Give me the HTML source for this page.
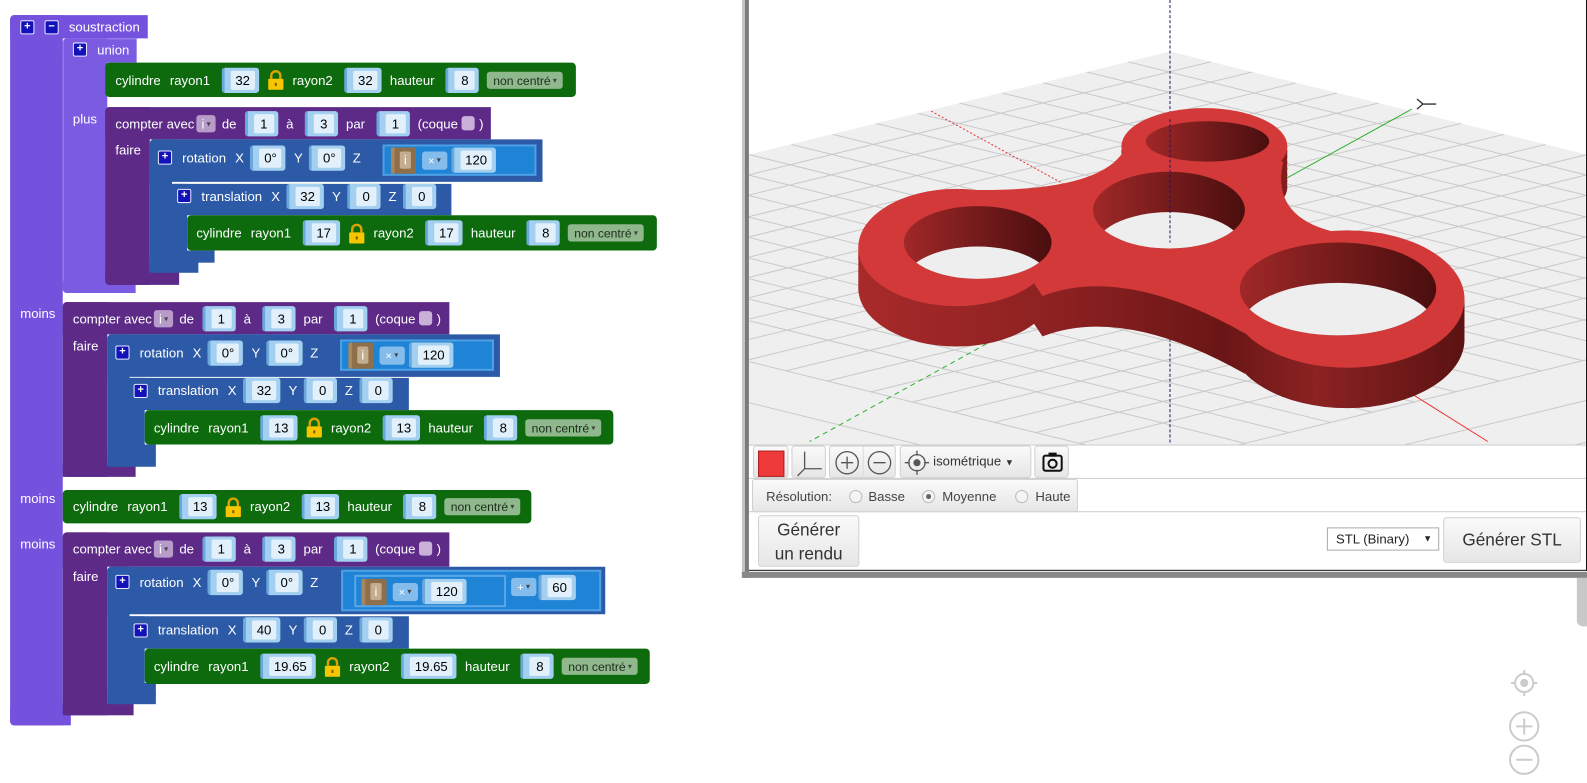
<!DOCTYPE html>
<html><head><meta charset="utf-8"><style>
html,body{margin:0;padding:0;background:#fff;overflow:hidden;width:1587px;height:782px}
#w{position:absolute;left:0;top:0;width:1568px;height:775px;transform:scale(1.0121,1.0103);transform-origin:0 0;font-family:"Liberation Sans",sans-serif}
.b{position:absolute}
.P{background:#7452de}.U{background:#7a5be2}.C{background:#5d2a88}.B{background:#2c5aa6}.G{background:#0d6b0d}
.r{position:absolute;display:flex;align-items:center;color:#fff;font-size:13px;white-space:nowrap}
.t{margin-right:9px}
.f{display:inline-flex;align-items:center;height:25px;background:#a3cff0;border-radius:3px;padding:0 4px 0 6px;margin:0 8px 0 2px;border-left:3px solid #6aa8dc}
.f i{font-style:normal;background:#e1f0fb;color:#000;height:19px;line-height:19px;padding:0 5px;border-radius:2px;min-width:10px;text-align:center}
.dd{display:inline-block;background:#8fb88c;color:#1d2b1d;height:17px;line-height:17px;padding:0 6px;border-radius:3px;font-size:12px}
.dd:after,.vd:after,.od:after{content:" \25BE";font-size:8px;vertical-align:2px;color:#444}
.vd{display:inline-block;background:#b79cc9;color:#fff;height:17px;line-height:17px;padding:0 5px;border-radius:3px;margin:0 6px 0 2px}
.pm{display:inline-block;width:12px;height:12px;background:#1212b8;border:1px solid #e8e8ff;border-radius:2px;color:#fff;font-size:11px;line-height:11px;text-align:center;font-weight:bold;margin-right:10px}
.cb{display:inline-block;width:13px;height:14px;background:#c9b0d8;border-radius:3px;margin:0 4px}
.lk{margin-right:8px}
.m{position:absolute;background:#1f83d6;border:2px solid #4f9fe4;box-sizing:border-box}
.var{display:inline-flex;align-items:center;background:#8e6f49;height:26px;padding:0 5px;border-radius:2px;margin-right:6px;border-left:4px solid #a58860}
.var span{background:#c2ad8e;color:#fff;height:17px;line-height:17px;padding:0 4px;border-radius:2px}
.od{display:inline-block;background:#84bcec;color:#fff;height:18px;line-height:18px;padding:0 6px;border-radius:3px;font-size:11px;margin-right:4px}
.lbl{position:absolute;color:#fff;font-size:13px}
.btn{position:absolute;box-sizing:border-box;border:1px solid #cfcfcf;border-radius:3px;background:linear-gradient(#fafafa,#e6e6e6);color:#333}
</style></head><body><div id="w">

<!-- soustraction -->
<div class="b P" style="left:10px;top:15px;width:136px;height:23px;border-radius:4px 0 0 0"></div>
<div class="b P" style="left:10px;top:15px;width:52px;height:703px;border-radius:4px 0 0 4px"></div>
<div class="b P" style="left:10px;top:700px;width:60px;height:18px;border-radius:0 0 0 4px"></div>
<div class="r" style="left:20px;top:15px;height:23px"><span class="pm">+</span><span class="pm">−</span>soustraction</div>
<div class="lbl" style="left:20px;top:303px">moins</div>
<div class="lbl" style="left:20px;top:486px">moins</div>
<div class="lbl" style="left:20px;top:531px">moins</div>

<!-- union -->
<div class="b U" style="left:62px;top:38px;width:73px;height:24px;border-radius:4px 0 0 0;box-shadow:inset 1px 1px 0 #9a84ec"></div>
<div class="b U" style="left:62px;top:38px;width:44px;height:252px;border-radius:4px 0 0 4px;box-shadow:inset 1px 0 0 #9a84ec"></div>
<div class="b U" style="left:62px;top:278px;width:72px;height:12px;border-radius:0 0 0 4px"></div>
<div class="r" style="left:72px;top:38px;height:22px"><span class="pm">+</span>union</div>
<div class="lbl" style="left:72px;top:110px">plus</div>

<!-- cyl1 -->
<div class="b G" style="left:104px;top:62px;width:465px;height:34px;border-radius:4px"></div>
<div class="r" style="left:114px;top:62px;height:34px"><span class="t">cylindre</span><span class="t">rayon1</span><span class="f"><i>32</i></span><svg class="lk" width="17" height="20" viewBox="0 0 17 20"><path d="M4 9V6a4.5 4.5 0 0 1 9 0v3" fill="none" stroke="#d9a400" stroke-width="2.4"/><rect x="1" y="9" width="15" height="11" rx="1" fill="#f7c600"/><rect x="7.5" y="13" width="2" height="3" fill="#7a5a00"/></svg><span class="t">rayon2</span><span class="f"><i>32</i></span><span class="t">hauteur</span><span class="f"><i>8</i></span><span class="dd">non centré</span></div>

<!-- compter1 -->
<div class="b C" style="left:104px;top:106px;width:381px;height:32px;border-radius:4px 0 0 0"></div>
<div class="b C" style="left:104px;top:106px;width:44px;height:176px;border-radius:4px 0 0 4px"></div>
<div class="b C" style="left:104px;top:268px;width:73px;height:14px;border-radius:0 0 0 4px"></div>
<div class="r" style="left:114px;top:106px;height:32px">compter avec<span class="vd">i</span><span style="margin-right:6px">de</span><span class="f"><i>1</i></span><span class="t">à</span><span class="f"><i>3</i></span><span class="t">par</span><span class="f"><i>1</i></span>(coque<span class="cb"></span>)</div>
<div class="lbl" style="left:114px;top:141px">faire</div>

<!-- rot1 -->
<div class="b B" style="left:148px;top:138px;width:388px;height:42px;border-radius:4px 0 0 0"></div>
<div class="b B" style="left:148px;top:138px;width:22px;height:132px;border-radius:4px 0 0 4px"></div>
<div class="b B" style="left:148px;top:258px;width:48px;height:12px"></div>
<div class="r" style="left:156px;top:142px;height:28px"><span class="pm">+</span><span class="t">rotation</span><span style="margin-right:4px">X</span><span class="f"><i>0°</i></span><span style="margin-right:4px">Y</span><span class="f"><i>0°</i></span>Z</div>
<div class="m" style="left:378px;top:143px;width:152px;height:31px"></div>
<div class="r" style="left:386px;top:145px;height:27px"><span class="var"><span>i</span></span><span class="od">×</span><span class="f" style="margin:0"><i>120</i></span></div>

<!-- trans1 -->
<div class="b B" style="left:167px;top:182px;width:279px;height:31px;border-radius:4px 0 0 0"></div>
<div class="b B" style="left:167px;top:182px;width:18px;height:78px;border-radius:4px 0 0 4px"></div>
<div class="b B" style="left:167px;top:248px;width:45px;height:12px"></div>
<div class="r" style="left:175px;top:182px;height:24px"><span class="pm">+</span><span class="t">translation</span><span style="margin-right:4px">X</span><span class="f"><i>32</i></span><span style="margin-right:4px">Y</span><span class="f"><i>0</i></span><span style="margin-right:4px">Z</span><span class="f"><i>0</i></span></div>

<!-- cyl2 -->
<div class="b G" style="left:185px;top:213px;width:464px;height:35px;border-radius:4px"></div>
<div class="r" style="left:194px;top:213px;height:35px"><span class="t">cylindre</span><span class="t">rayon1</span><span class="f"><i>17</i></span><svg class="lk" width="17" height="20" viewBox="0 0 17 20"><path d="M4 9V6a4.5 4.5 0 0 1 9 0v3" fill="none" stroke="#d9a400" stroke-width="2.4"/><rect x="1" y="9" width="15" height="11" rx="1" fill="#f7c600"/><rect x="7.5" y="13" width="2" height="3" fill="#7a5a00"/></svg><span class="t">rayon2</span><span class="f"><i>17</i></span><span class="t">hauteur</span><span class="f"><i>8</i></span><span class="dd">non centré</span></div>

<!-- compter2 -->
<div class="b C" style="left:62px;top:299px;width:382px;height:32px;border-radius:4px 0 0 0"></div>
<div class="b C" style="left:62px;top:299px;width:44px;height:173px;border-radius:4px 0 0 4px"></div>
<div class="b C" style="left:62px;top:460px;width:72px;height:12px"></div>
<div class="r" style="left:72px;top:299px;height:32px">compter avec<span class="vd">i</span><span style="margin-right:6px">de</span><span class="f"><i>1</i></span><span class="t">à</span><span class="f"><i>3</i></span><span class="t">par</span><span class="f"><i>1</i></span>(coque<span class="cb"></span>)</div>
<div class="lbl" style="left:72px;top:335px">faire</div>

<!-- rot2 -->
<div class="b B" style="left:106px;top:331px;width:388px;height:42px;border-radius:4px 0 0 0"></div>
<div class="b B" style="left:106px;top:331px;width:22px;height:131px;border-radius:4px 0 0 4px"></div>
<div class="b B" style="left:106px;top:450px;width:48px;height:12px"></div>
<div class="r" style="left:114px;top:335px;height:28px"><span class="pm">+</span><span class="t">rotation</span><span style="margin-right:4px">X</span><span class="f"><i>0°</i></span><span style="margin-right:4px">Y</span><span class="f"><i>0°</i></span>Z</div>
<div class="m" style="left:336px;top:336px;width:152px;height:31px"></div>
<div class="r" style="left:344px;top:338px;height:27px"><span class="var"><span>i</span></span><span class="od">×</span><span class="f" style="margin:0"><i>120</i></span></div>

<!-- trans2 -->
<div class="b B" style="left:124px;top:374px;width:280px;height:32px;border-radius:4px 0 0 0"></div>
<div class="b B" style="left:124px;top:374px;width:19px;height:78px;border-radius:4px 0 0 4px"></div>
<div class="b B" style="left:124px;top:440px;width:30px;height:12px"></div>
<div class="r" style="left:132px;top:374px;height:25px"><span class="pm">+</span><span class="t">translation</span><span style="margin-right:4px">X</span><span class="f"><i>32</i></span><span style="margin-right:4px">Y</span><span class="f"><i>0</i></span><span style="margin-right:4px">Z</span><span class="f"><i>0</i></span></div>

<!-- cyl3 -->
<div class="b G" style="left:143px;top:406px;width:463px;height:34px;border-radius:4px"></div>
<div class="r" style="left:152px;top:406px;height:34px"><span class="t">cylindre</span><span class="t">rayon1</span><span class="f"><i>13</i></span><svg class="lk" width="17" height="20" viewBox="0 0 17 20"><path d="M4 9V6a4.5 4.5 0 0 1 9 0v3" fill="none" stroke="#d9a400" stroke-width="2.4"/><rect x="1" y="9" width="15" height="11" rx="1" fill="#f7c600"/><rect x="7.5" y="13" width="2" height="3" fill="#7a5a00"/></svg><span class="t">rayon2</span><span class="f"><i>13</i></span><span class="t">hauteur</span><span class="f"><i>8</i></span><span class="dd">non centré</span></div>

<!-- cyl4 -->
<div class="b G" style="left:62px;top:485px;width:463px;height:33px;border-radius:4px"></div>
<div class="r" style="left:72px;top:485px;height:33px"><span class="t">cylindre</span><span class="t">rayon1</span><span class="f"><i>13</i></span><svg class="lk" width="17" height="20" viewBox="0 0 17 20"><path d="M4 9V6a4.5 4.5 0 0 1 9 0v3" fill="none" stroke="#d9a400" stroke-width="2.4"/><rect x="1" y="9" width="15" height="11" rx="1" fill="#f7c600"/><rect x="7.5" y="13" width="2" height="3" fill="#7a5a00"/></svg><span class="t">rayon2</span><span class="f"><i>13</i></span><span class="t">hauteur</span><span class="f"><i>8</i></span><span class="dd">non centré</span></div>

<!-- compter3 -->
<div class="b C" style="left:62px;top:527px;width:382px;height:34px;border-radius:4px 0 0 0"></div>
<div class="b C" style="left:62px;top:527px;width:44px;height:181px;border-radius:4px 0 0 4px"></div>
<div class="b C" style="left:62px;top:696px;width:70px;height:12px"></div>
<div class="r" style="left:72px;top:527px;height:32px">compter avec<span class="vd">i</span><span style="margin-right:6px">de</span><span class="f"><i>1</i></span><span class="t">à</span><span class="f"><i>3</i></span><span class="t">par</span><span class="f"><i>1</i></span>(coque<span class="cb"></span>)</div>
<div class="lbl" style="left:72px;top:563px">faire</div>

<!-- rot3 -->
<div class="b B" style="left:106px;top:561px;width:492px;height:47px;border-radius:4px 0 0 0"></div>
<div class="b B" style="left:106px;top:561px;width:22px;height:136px;border-radius:4px 0 0 4px"></div>
<div class="b B" style="left:106px;top:685px;width:48px;height:12px"></div>
<div class="r" style="left:114px;top:562px;height:28px"><span class="pm">+</span><span class="t">rotation</span><span style="margin-right:4px">X</span><span class="f"><i>0°</i></span><span style="margin-right:4px">Y</span><span class="f"><i>0°</i></span>Z</div>
<div class="m" style="left:337px;top:564px;width:257px;height:41px"></div>
<div class="m" style="left:350px;top:569px;width:150px;height:32px;border-color:#5aa6e6"></div>
<div class="r" style="left:357px;top:572px;height:27px"><span class="var"><span>i</span></span><span class="od">×</span><span class="f" style="margin:0"><i>120</i></span></div>
<div class="r" style="left:505px;top:568px;height:26px"><span class="od" style="margin-right:2px">+</span><span class="f" style="margin:0"><i>60</i></span></div>

<!-- trans3 -->
<div class="b B" style="left:124px;top:610px;width:280px;height:32px;border-radius:4px 0 0 0"></div>
<div class="b B" style="left:124px;top:610px;width:19px;height:78px;border-radius:4px 0 0 4px"></div>
<div class="b B" style="left:124px;top:676px;width:30px;height:12px"></div>
<div class="r" style="left:132px;top:611px;height:25px"><span class="pm">+</span><span class="t">translation</span><span style="margin-right:4px">X</span><span class="f"><i>40</i></span><span style="margin-right:4px">Y</span><span class="f"><i>0</i></span><span style="margin-right:4px">Z</span><span class="f"><i>0</i></span></div>

<!-- cyl5 -->
<div class="b G" style="left:143px;top:642px;width:499px;height:35px;border-radius:4px"></div>
<div class="r" style="left:152px;top:642px;height:35px"><span class="t">cylindre</span><span class="t">rayon1</span><span class="f"><i>19.65</i></span><svg class="lk" width="17" height="20" viewBox="0 0 17 20"><path d="M4 9V6a4.5 4.5 0 0 1 9 0v3" fill="none" stroke="#d9a400" stroke-width="2.4"/><rect x="1" y="9" width="15" height="11" rx="1" fill="#f7c600"/><rect x="7.5" y="13" width="2" height="3" fill="#7a5a00"/></svg><span class="t">rayon2</span><span class="f"><i>19.65</i></span><span class="t">hauteur</span><span class="f"><i>8</i></span><span class="dd">non centré</span></div>

<!-- viewer frame -->
<div class="b" style="left:733px;top:0;width:3px;height:572px;background:#c4c4c4"></div>
<div class="b" style="left:736px;top:0;width:4px;height:572px;background:#7a7a7a"></div>
<div class="b" style="left:733px;top:566px;width:835px;height:6px;background:#888"></div>
<div class="b" style="left:740px;top:0;width:828px;height:565px;background:#fff;border-bottom:1px solid #111;box-sizing:border-box;border-right:1px solid #111"></div>
<div class="b" style="left:1558px;top:572px;width:10px;height:48px;background:#c8c8c8;border-radius:0 0 0 6px"></div>

<svg class="b" style="left:0;top:0" width="1568" height="440" viewBox="0 0 1568 440">
<defs>
<clipPath id="vp"><rect x="740" y="0" width="827" height="440"/></clipPath>
<clipPath id="pl"><polygon points="740,153 1156,51 1568,153 1568,440 740,440"/></clipPath>
<linearGradient id="sd" gradientUnits="userSpaceOnUse" x1="850" x2="1450" y1="0" y2="0"><stop offset="0" stop-color="#a82a2a"/><stop offset="0.35" stop-color="#8a2020"/><stop offset="0.6" stop-color="#6a1616"/><stop offset="0.75" stop-color="#8c2222"/><stop offset="1" stop-color="#5a1212"/></linearGradient>
<linearGradient id="hl" x1="0" x2="1"><stop offset="0" stop-color="#a02828"/><stop offset="1" stop-color="#4a0e0e"/></linearGradient>
<clipPath id="h1"><ellipse cx="966" cy="240" rx="73" ry="36"/></clipPath>
<clipPath id="h2"><ellipse cx="1155" cy="208" rx="75" ry="38"/></clipPath>
<clipPath id="h3"><ellipse cx="1193" cy="140" rx="61" ry="20"/></clipPath>
<clipPath id="h4"><ellipse cx="1322" cy="286" rx="97" ry="46"/></clipPath>
<g id="sp">
<ellipse cx="945" cy="245" rx="97" ry="58"/>
<ellipse cx="1190" cy="145" rx="82" ry="38"/>
<ellipse cx="1331" cy="296" rx="116" ry="68"/>
<path d="M960,188 Q1085,190 1110,150 L1268,160 Q1255,215 1320,230 L1230,330 Q1110,262 1030,293 Z"/>
</g>
</defs>
<g clip-path="url(#vp)">
<polygon points="740,153 1156,51 1568,153 1568,440 740,440" fill="#efefef"/>
<g clip-path="url(#pl)" stroke="#c9c9c9" stroke-width="1" fill="none">
<path d="M1197,61L365,265M1238,71L406,275M1280,82L448,286M1321,92L489,296M1362,102L530,306M1403,112L571,316M1444,122L612,326M1486,133L654,337M1527,143L695,347M1568,153L736,357M1609,163L777,367M1650,173L818,377M1692,184L860,388M1733,194L901,398M1774,204L942,408M1815,214L983,418M1856,224L1024,428M1898,235L1066,439M1980,255L1148,459M2062,275L1230,479M2145,296L1313,500M2227,316L1395,520M2310,337L1478,541M2392,357L1560,561"/>
<path d="M1114,61L1938,265M1073,71L1897,275M1031,82L1855,286M990,92L1814,296M948,102L1772,306M906,112L1730,316M865,122L1689,326M823,133L1647,337M782,143L1606,347M740,153L1564,357M698,163L1522,367M657,173L1481,377M615,184L1439,388M574,194L1398,398M532,204L1356,408M490,214L1314,418M449,224L1273,428M407,235L1231,439M324,255L1148,459M241,275L1065,479M158,296L982,500M74,316L898,520M-9,337L815,541"/>
</g>
<line x1="1156" y1="0" x2="1156" y2="440" stroke="#1b1b6b" stroke-dasharray="3,2"/>
<line x1="920" y1="110" x2="1156" y2="240" stroke="#f03030" stroke-dasharray="2,2"/>
<line x1="1156" y1="240" x2="1470" y2="437" stroke="#f03030"/>
<line x1="1156" y1="240" x2="1395" y2="108" stroke="#30b030"/>
<line x1="1156" y1="240" x2="800" y2="437" stroke="#30b030" stroke-dasharray="5,4"/>
<path d="M1400,98l6,5l-6,5M1406,103h13" stroke="#333" fill="none" stroke-width="1.3"/>
<!-- spinner sides -->
<g fill="url(#sd)">
<use href="#sp" y="40"/><use href="#sp" y="34"/><use href="#sp" y="28"/><use href="#sp" y="22"/><use href="#sp" y="16"/><use href="#sp" y="10"/><use href="#sp" y="5"/>
</g>
<g fill="#d4393a"><use href="#sp"/></g>
<g fill="url(#hl)">
<ellipse cx="966" cy="240" rx="73" ry="36"/><ellipse cx="1155" cy="208" rx="75" ry="38"/><ellipse cx="1193" cy="140" rx="61" ry="20"/><ellipse cx="1322" cy="286" rx="97" ry="46"/>
</g>
<g fill="#eeeeee">
<ellipse clip-path="url(#h1)" cx="966" cy="280" rx="73" ry="36"/>
<ellipse clip-path="url(#h2)" cx="1155" cy="248" rx="75" ry="38"/>
<ellipse clip-path="url(#h3)" cx="1193" cy="180" rx="61" ry="20"/>
<ellipse clip-path="url(#h4)" cx="1322" cy="326" rx="97" ry="46"/>
</g>
<line x1="1156" y1="118" x2="1156" y2="240" stroke="#1b1b6b" stroke-dasharray="3,2"/>
</g>
</svg>

<!-- toolbar -->
<div class="b" style="left:740px;top:440px;width:827px;height:1px;background:#ccc"></div>
<div class="b" style="left:740px;top:473px;width:827px;height:1px;background:#ccc"></div>
<div class="b" style="left:740px;top:506px;width:827px;height:1px;background:#ccc"></div>
<div class="btn" style="left:744px;top:441px;width:35px;height:32px;border-radius:3px"><div class="b" style="left:4px;top:4px;width:24px;height:24px;background:#ee3a3a;border:1px solid #a22"></div></div>
<div class="btn" style="left:782px;top:441px;width:34px;height:32px"><svg width="34" height="32"><path d="M12 5v17h17M12 22l-7 7" stroke="#555" fill="none" stroke-width="1.3"/></svg></div>
<div class="btn" style="left:819px;top:441px;width:66px;height:32px"><svg width="66" height="32"><circle cx="17" cy="16" r="11" stroke="#555" fill="none" stroke-width="1.3"/><path d="M11 16h12M17 10v12" stroke="#555" stroke-width="1.3"/><line x1="33" y1="0" x2="33" y2="32" stroke="#ddd"/><circle cx="49" cy="16" r="11" stroke="#555" fill="none" stroke-width="1.3"/><path d="M43 16h12" stroke="#555" stroke-width="1.3"/></svg></div>
<div class="btn" style="left:889px;top:441px;width:130px;height:32px"><svg width="32" height="32" style="position:absolute;left:0;top:0"><circle cx="16" cy="16" r="8" stroke="#555" fill="none" stroke-width="1.3"/><circle cx="16" cy="16" r="3.5" fill="#555"/><path d="M16 4v5M16 23v5M4 16h5M23 16h5" stroke="#555" stroke-width="1.3"/></svg><span style="position:absolute;left:32px;top:7px;font-size:13px;color:#333">isométrique <span style="font-size:9px">▼</span></span></div>
<div class="btn" style="left:1022px;top:441px;width:34px;height:32px"><svg width="34" height="32"><rect x="8" y="9" width="18" height="15" rx="2" stroke="#111" fill="none" stroke-width="2"/><rect x="13" y="6" width="8" height="4" fill="#111"/><circle cx="17" cy="17" r="4" stroke="#111" fill="none" stroke-width="2"/></svg></div>
<div class="btn" style="left:743px;top:474px;width:322px;height:33px;font-size:13px"><span style="position:absolute;left:13px;top:9px;color:#444">Résolution:</span>
<span style="position:absolute;left:95px;top:10px;width:11px;height:11px;border:1px solid #bbb;border-radius:50%;background:#f4f4f4"></span><span style="position:absolute;left:114px;top:9px;color:#444">Basse</span>
<span style="position:absolute;left:167px;top:10px;width:11px;height:11px;border:1px solid #bbb;border-radius:50%;background:#f4f4f4"><span style="position:absolute;left:3px;top:3px;width:5px;height:5px;border-radius:50%;background:#666"></span></span><span style="position:absolute;left:187px;top:9px;color:#444">Moyenne</span>
<span style="position:absolute;left:259px;top:10px;width:11px;height:11px;border:1px solid #bbb;border-radius:50%;background:#f4f4f4"></span><span style="position:absolute;left:279px;top:9px;color:#444">Haute</span></div>
<div class="btn" style="left:749px;top:510px;width:100px;height:51px;font-size:17px;text-align:center;line-height:24px;padding-top:2px">Générer<br>un rendu</div>
<div class="b" style="left:1311px;top:522px;width:111px;height:23px;border:1px solid #aaa;box-sizing:border-box;font-size:13px;color:#222;line-height:21px;padding-left:8px;background:#fff">STL (Binary) <span style="position:absolute;right:6px;font-size:9px">▼</span></div>
<div class="btn" style="left:1426px;top:512px;width:136px;height:45px;font-size:17px;text-align:center;line-height:43px">Générer STL</div>

<!-- side icons -->
<svg class="b" style="left:1486px;top:660px" width="40" height="112"><circle cx="20" cy="16" r="9" stroke="#ccc" fill="none" stroke-width="2"/><circle cx="20" cy="16" r="4" fill="#ccc"/><path d="M20 3v5M20 24v5M7 16h5M28 16h5" stroke="#ccc" stroke-width="2"/><circle cx="20" cy="59" r="14" stroke="#ccc" fill="none" stroke-width="2"/><path d="M12 59h16M20 51v16" stroke="#ccc" stroke-width="2"/><circle cx="20" cy="92" r="14" stroke="#ccc" fill="none" stroke-width="2"/><path d="M12 92h16" stroke="#ccc" stroke-width="2"/></svg>
</div></body></html>
